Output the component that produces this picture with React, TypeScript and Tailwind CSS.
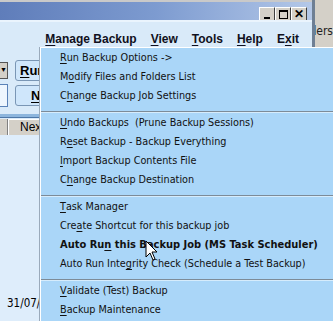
import React from 'react';

const U = ({ children }: { children: React.ReactNode }) => <span className="underline underline-offset-[2px]">{children}</span>;

type Item = { pre?: string; u: string; post: string; bold?: boolean };

const groups: Item[][] = [
  [
    { u: 'R', post: 'un Backup Options ->' },
    { pre: 'M', u: 'o', post: 'dify Files and Folders List' },
    { pre: 'C', u: 'h', post: 'ange Backup Job Settings' },
  ],
  [
    { u: 'U', post: 'ndo Backups  (Prune Backup Sessions)' },
    { pre: 'R', u: 'e', post: 'set Backup - Backup Everything' },
    { u: 'I', post: 'mport Backup Contents File' },
    { pre: 'C', u: 'h', post: 'ange Backup Destination' },
  ],
  [
    { u: 'T', post: 'ask Manager' },
    { pre: 'Cre', u: 'a', post: 'te Shortcut for this backup job' },
    { pre: 'Auto Ru', u: 'n', post: ' this Backup Job (MS Task Scheduler)', bold: true },
    { pre: 'Auto Run Inte', u: 'g', post: 'rity Check (Schedule a Test Backup)' },
  ],
  [
    { u: 'V', post: 'alidate (Test) Backup' },
    { u: 'B', post: 'ackup Maintenance' },
  ],
];

const MenuItem = ({ item }: { item: Item }) => (
  <div className={`h-[19px] flex items-center pl-[19px] whitespace-pre text-[#111] ${item.bold ? 'font-bold text-[11px]' : 'text-[10.75px]'}`}>
    {item.pre}
    <U>{item.u}</U>
    {item.post}
  </div>
);

const Cursor = () => (
  <svg className="absolute left-[145px] top-[240px]" width="14" height="22" viewBox="0 0 14 22">
    <path d="M1 1 L1 17 L5 13 L8 20 L10 19 L7 12 L12 12 Z" fill="white" stroke="black" strokeWidth="1" />
  </svg>
);

const tahoma = { fontFamily: '"DejaVu Sans Condensed", "DejaVu Sans", sans-serif' };

export default function App() {
  return (
    <div className="relative w-[333px] h-[321px] overflow-hidden flex bg-[#d4d0c8]" style={{ fontFamily: '"Liberation Sans", Arial, sans-serif' }}>
      {/* app window */}
      <div className="w-[312px] shrink-0 flex flex-col">
        <div className="h-[2px] bg-[#c9c9c9]" />
        <div className="h-[18px] bg-gradient-to-r from-[#5f7dba] via-[#7d9bd0] to-[#b4c8e8] flex justify-end items-start pt-[5px] pr-[5px]">
          <div className="flex">
            {[0, 1, 2].map((i) => (
              <div key={i} className="w-[16px] h-[14px] shrink-0 bg-[#d4d0c8] border border-t-white border-l-white border-r-[#404040] border-b-[#404040] flex items-center justify-center leading-none text-black">
                {i === 0 ? <div className="w-[6px] h-[2px] bg-black mt-[7px]" /> : i === 1 ? <div className="w-[9px] h-[9px] border border-black border-t-2" /> : <span className="text-[12px] font-bold">✕</span>}
              </div>
            ))}
          </div>
        </div>
        <div className="h-[2px] bg-[#eaf4fd]" />
        <div className="flex-1 bg-[#d9eaf9] flex flex-col">
          <div className="h-[25px] pt-[8px] flex items-center justify-end pr-[13px] gap-[14px] text-[12px] font-bold text-[#101020]">
            <span><U>M</U>anage Backup</span>
            <span><U>V</U>iew</span>
            <span><U>T</U>ools</span>
            <span><U>H</U>elp</span>
            <span>E<U>x</U>it</span>
          </div>
          <div className="mt-[13px] flex items-center gap-[7px]">
            <div className="w-[8px] h-[17px] bg-[#d4d0c8] border border-[#555] border-l-0 flex items-center justify-center text-[7px]">▼</div>
            <div className="w-[30px] h-[21px] rounded-[3px] border border-[#7a96b5] bg-[#cfe6fb] text-[13px] font-bold pl-[4px] leading-[19px]"><U>R</U>un</div>
          </div>
          <div className="mt-[3px] flex items-center gap-[7px]">
            <div className="w-[8px] h-[23px] bg-[#eef6fe] border border-[#5a82b8] border-l-0" />
            <div className="w-[30px] h-[21px] rounded-[3px] border border-[#7a96b5] bg-[#cfe6fb] text-[13px] font-bold pl-[15px] leading-[19px]"><U>N</U>o</div>
          </div>
          <div className="mt-[7px] h-[4px] bg-[#8cb5dd] border-b border-[#4d77a8]" />
          <div className="h-[17px] flex items-end text-[12px]">
            <div className="w-[8px] h-[16px] bg-[#d4d0c8] border-r border-[#808080]" />
            <div className="h-[16px] px-[11px] bg-[#d4d0c8] border-l border-t border-white leading-[15px]">Next Message</div>
          </div>
          <div className="flex-1 bg-[#deedfb] flex flex-col justify-end pb-[9px] pl-[7px] text-[11.5px]" style={tahoma}>
            <span>31/07/2008</span>
          </div>
        </div>
      </div>
      {/* right neighbour window */}
      <div className="flex-1 min-w-0 border-l-[3px] border-[#6e7f94] bg-[#d4d0c8] pt-[22px] text-[12px] text-[#222] overflow-hidden flex justify-end whitespace-nowrap" style={tahoma}>
        <span className="shrink-0">Folders</span>
      </div>

      {/* dropdown menu */}
      <div className="absolute left-[40px] top-[47px] right-0 bottom-0 bg-[#aad6f8] border-l border-t border-white shadow-[-1px_0_0_#9aaabb] pt-[1px]" style={tahoma}>
        {groups.map((g, gi) => (
          <div key={gi}>
            {gi > 0 && (
              <div className="h-[8px] flex flex-col justify-end pb-[1px]">
                <div className="h-px bg-[#7d8b98]" />
                <div className="h-px bg-[#d6ecfc]" />
              </div>
            )}
            {g.map((it, ii) => <MenuItem key={ii} item={it} />)}
          </div>
        ))}
      </div>
      <Cursor />
    </div>
  );
}
